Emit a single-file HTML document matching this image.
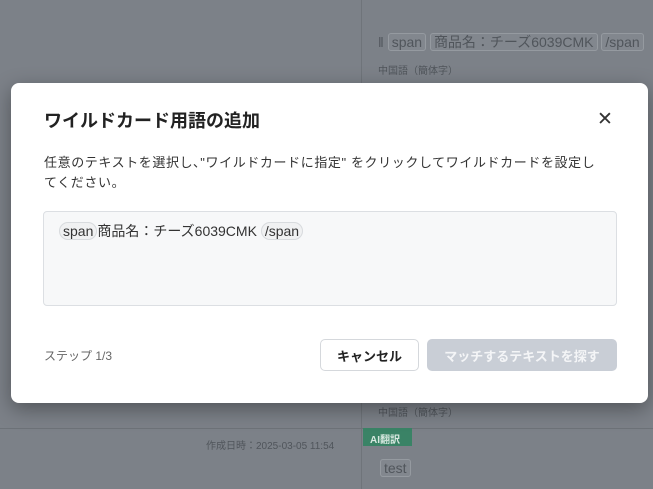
<!DOCTYPE html>
<html><head><meta charset="utf-8"><style>
*{box-sizing:border-box;margin:0;padding:0}
body{width:653px;height:489px;overflow:hidden;background:#7c8188;font-family:"Liberation Sans","Noto Sans CJK JP",sans-serif;position:relative}
.bg{position:absolute;color:#50555b}
.tag{border:1px solid #959aa0;border-radius:3px;padding:0 3px;background:#82878e}
.modal{position:absolute;left:11px;top:83px;width:637px;height:320px;background:#fff;border-radius:8px;box-shadow:0 6px 20px rgba(0,0,0,.35)}
h1{position:absolute;left:33px;top:24px;font-size:18px;font-weight:bold;color:#222}
.x{position:absolute;left:586px;top:25px;font-size:19px;color:#333}
.desc{position:absolute;left:33px;top:70px;width:560px;font-size:13px;line-height:20px;color:#333;letter-spacing:.6px}
.box{position:absolute;left:32px;top:128px;width:574px;height:95px;background:#f7f8f9;border:1px solid #dcdfe3;border-radius:4px}
.line{position:absolute;left:15px;top:9px;font-size:14px;color:#333;white-space:nowrap}
.pill{border:1px solid #d8dbde;border-radius:9px;padding:0 3px;background:#f0f1f2}
.step{position:absolute;left:33px;top:264px;font-size:12px;color:#666}
.btn{position:absolute;top:256px;height:32px;border-radius:5px;font-size:13px;font-weight:bold;display:flex;align-items:center;justify-content:center}
.c{left:309px;width:99px;border:1px solid #d5d8dc;color:#222;background:#fff}
.m{left:416px;width:190px;background:#c9ced6;color:#f4f5f7}
</style></head><body>
<div style="position:absolute;left:361px;top:0;width:1px;height:489px;background:#6f747a"></div>
<div style="position:absolute;left:0;top:428px;width:653px;height:1px;background:#6d7278"></div>
<div class="bg" style="left:378px;top:32px;font-size:14px;white-space:nowrap">‖ <span class="tag">span</span> <span class="tag">商品名：チーズ6039CMK</span> <span class="tag">/span</span></div>
<div class="bg" style="left:378px;top:62px;font-size:10px">中国語（簡体字）</div>
<div class="bg" style="left:378px;top:404px;font-size:10px">中国語（簡体字）</div>
<div class="bg" style="left:206px;top:437px;font-size:10px">作成日時：2025-03-05 11:54</div>
<div style="position:absolute;left:363px;top:428px;width:49px;height:18px;background:#3a8366;color:#d8e8e0;font-size:10px;font-weight:bold;padding:3px 0 0 7px">AI翻訳</div>
<div class="bg" style="left:380px;top:460px;font-size:14px"><span class="tag">test</span></div>
<div class="modal">
<h1>ワイルドカード用語の追加</h1>
<div class="x">✕</div>
<div class="desc">任意のテキストを選択し､"ワイルドカードに指定" をクリックしてワイルドカードを設定してください。</div>
<div class="box"><div class="line"><span class="pill">span</span>商品名：チーズ6039CMK <span class="pill">/span</span></div></div>
<div class="step">ステップ 1/3</div>
<div class="btn c">キャンセル</div>
<div class="btn m">マッチするテキストを探す</div>
</div>
</body></html>
